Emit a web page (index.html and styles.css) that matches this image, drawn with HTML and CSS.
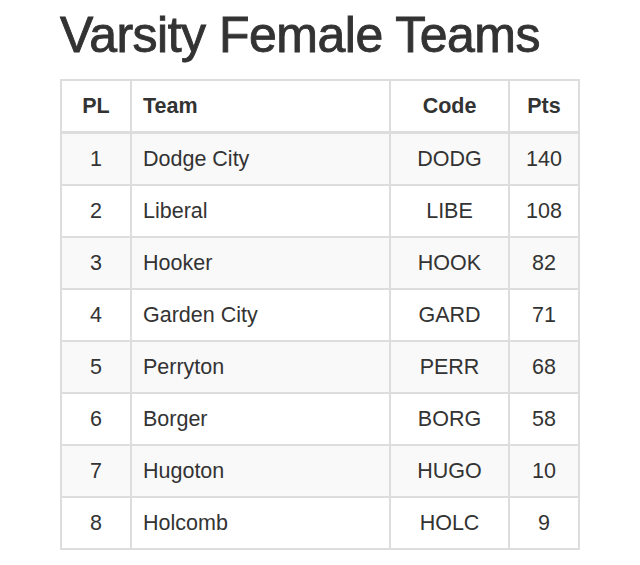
FILE: index.html
```html
<!DOCTYPE html>
<html>
<head>
<meta charset="utf-8">
<link rel="stylesheet" href="styles.css">
</head>
<body>
<div class="page">
  <h1 class="title">Varsity Female Teams</h1>
  <table class="standings">
    <colgroup>
      <col class="c-pl"><col class="c-team"><col class="c-code"><col class="c-pts">
    </colgroup>
    <thead>
      <tr><th class="center">PL</th><th>Team</th><th class="center">Code</th><th class="center">Pts</th></tr>
    </thead>
    <tbody>
      <tr><td class="center">1</td><td>Dodge City</td><td class="center">DODG</td><td class="center">140</td></tr>
      <tr><td class="center">2</td><td>Liberal</td><td class="center">LIBE</td><td class="center">108</td></tr>
      <tr><td class="center">3</td><td>Hooker</td><td class="center">HOOK</td><td class="center">82</td></tr>
      <tr><td class="center">4</td><td>Garden City</td><td class="center">GARD</td><td class="center">71</td></tr>
      <tr><td class="center">5</td><td>Perryton</td><td class="center">PERR</td><td class="center">68</td></tr>
      <tr><td class="center">6</td><td>Borger</td><td class="center">BORG</td><td class="center">58</td></tr>
      <tr><td class="center">7</td><td>Hugoton</td><td class="center">HUGO</td><td class="center">10</td></tr>
      <tr><td class="center">8</td><td>Holcomb</td><td class="center">HOLC</td><td class="center">9</td></tr>
    </tbody>
  </table>
</div>
</body>
</html>
```
FILE: styles.css
```css
html, body {
  margin: 0;
  padding: 0;
  background: #fff;
}
.page {
  padding: 8px 0 0 60px;
  font-family: "Liberation Sans", Arial, sans-serif;
  color: #333;
}
.title {
  margin: 0 0 16px 0;
  font-size: 50px;
  line-height: 55px;
  font-weight: normal;
  -webkit-text-stroke: 0.9px #333;
  letter-spacing: -0.5px;
  color: #333;
}
.standings {
  border-collapse: collapse;
  width: 518px;
  table-layout: fixed;
  font-size: 21.5px;
  line-height: 28px;
  border: 2px solid #ddd;
}
.c-pl { width: 70px; }
.c-team { width: 259px; }
.c-code { width: 119px; }
.c-pts { width: 70px; }
.standings th,
.standings td {
  padding: 11px 11px;
  border: 2px solid #ddd;
  text-align: left;
  vertical-align: top;
}
.standings thead th {
  font-weight: bold;
  border-bottom-width: 3px;
}
.standings .center {
  text-align: center;
}
.standings tbody tr:nth-child(odd) {
  background: #f9f9f9;
}
```
